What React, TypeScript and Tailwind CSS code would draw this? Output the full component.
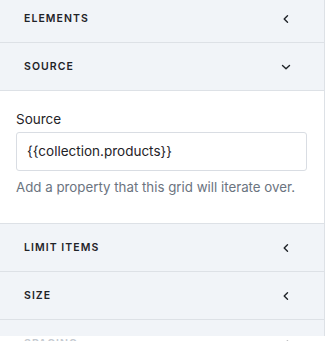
import React from 'react';

const Chevron: React.FC<{ open?: boolean }> = ({ open }) => (
  <svg width="12" height="12" viewBox="0 0 12 12" fill="none" className="text-[#1f2328]">
    {open ? (
      <path d="M2.5 4.5 L6 7.8 L9.5 4.5" stroke="currentColor" strokeWidth="1.4" strokeLinecap="round" strokeLinejoin="round" />
    ) : (
      <path d="M7.5 2.8 L4.2 6 L7.5 9.2" stroke="currentColor" strokeWidth="1.4" strokeLinecap="round" strokeLinejoin="round" />
    )}
  </svg>
);

const Header: React.FC<{ title: string; open?: boolean; faded?: boolean }> = ({ title, open, faded }) => (
  <div className="flex items-center justify-between h-12 pl-6 pr-[32px] border-b border-[#dde1e6]">
    <span
      className={`text-[10.5px] font-semibold tracking-[0.1em] ${faded ? 'text-[#c4c9d0]' : 'text-[#1f2328]'}`}
    >
      {title}
    </span>
    <span className={faded ? 'opacity-30' : ''}>
      <Chevron open={open} />
    </span>
  </div>
);

export default function App() {
  return (
    <div className="w-[327px] h-[341px] overflow-hidden bg-white font-['Inter',sans-serif]">
      <div className="w-[325px] h-full bg-[#f1f4f8] border-r border-[#dde1e6] -mt-[5px]">
        <Header title="ELEMENTS" />
        <Header title="SOURCE" open />
        <div className="bg-white px-4 pt-[18px] pb-[26px] border-b border-[#dde1e6]">
          <label className="block text-[13.5px] leading-5 text-[#1f2328] mb-[3px]">Source</label>
          <div className="w-[291px] h-[39px] flex items-center px-[10px] border border-[#d9dde3] rounded-[3px] text-[13.5px] text-[#1f2328]">
            {'{{collection.products}}'}
          </div>
          <p className="mt-[6px] text-[13.3px] leading-5 text-[#6b7480]">
            Add a property that this grid will iterate over.
          </p>
        </div>
        <Header title="LIMIT ITEMS" />
        <Header title="SIZE" />
        <Header title="SPACING" faded />
      </div>
    </div>
  );
}
